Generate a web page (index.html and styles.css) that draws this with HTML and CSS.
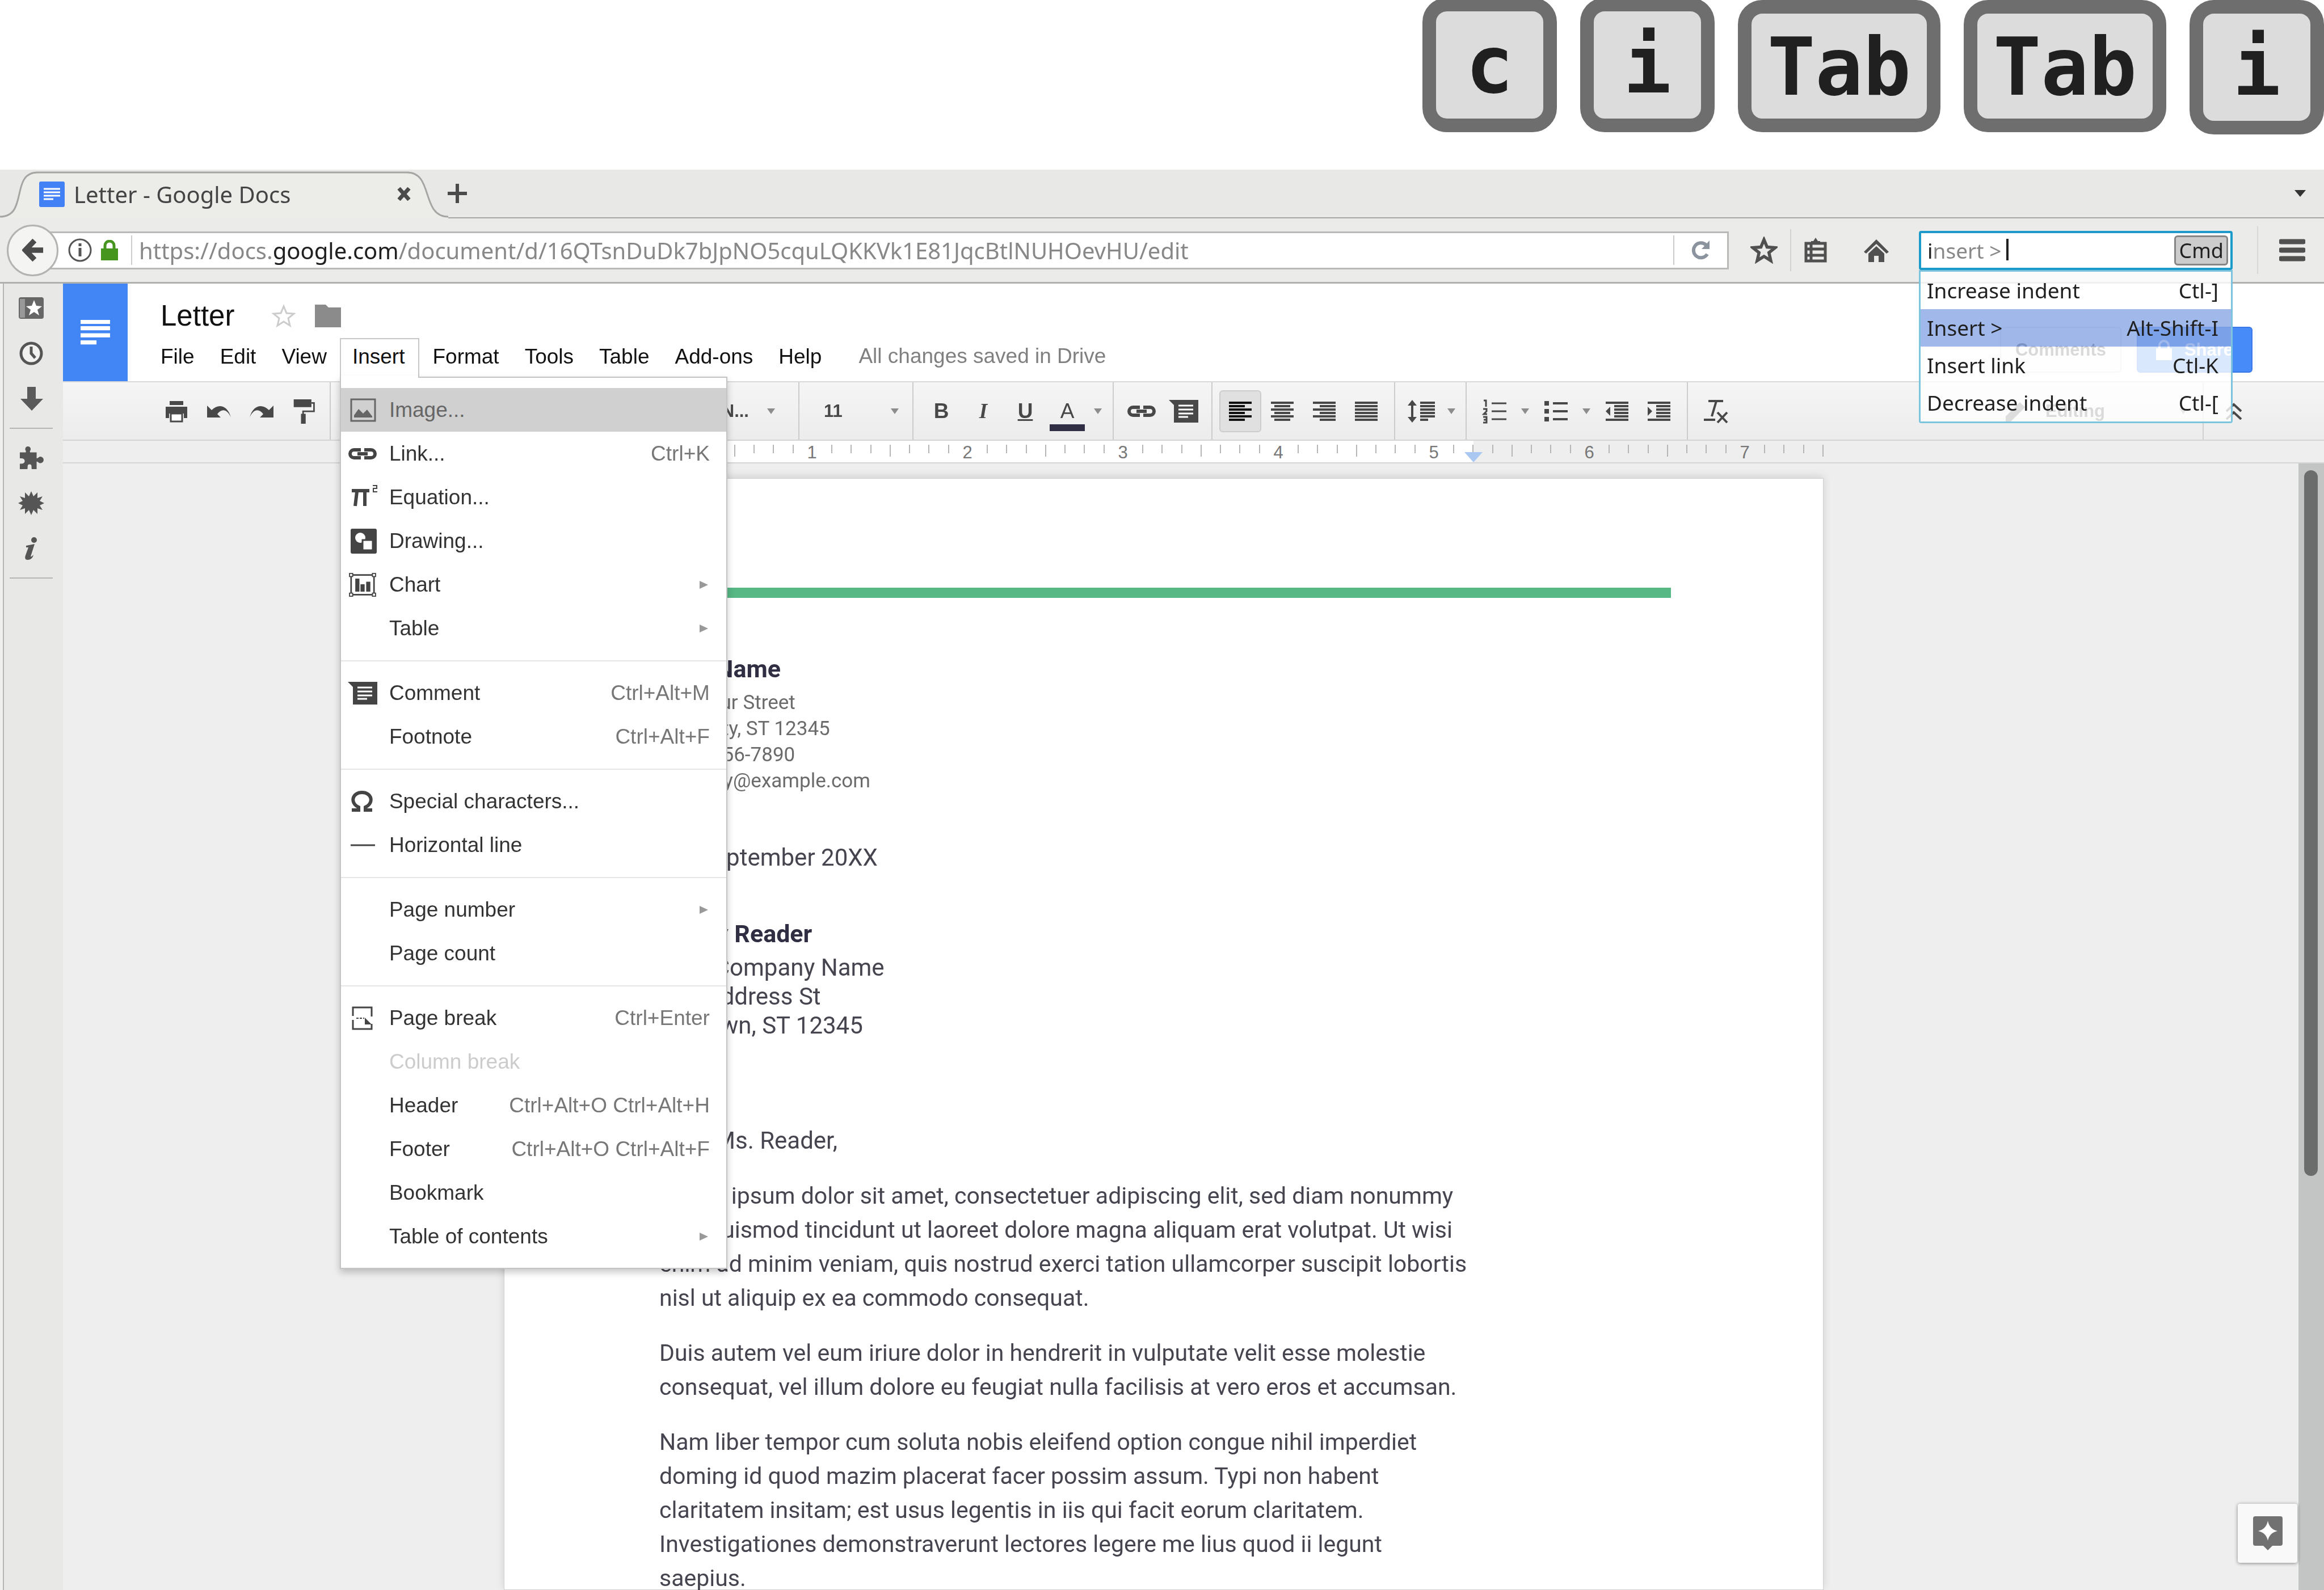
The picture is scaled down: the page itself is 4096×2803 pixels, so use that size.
FILE: index.html
```html
<!DOCTYPE html>
<html lang="en">
<head>
<meta charset="utf-8">
<title>Letter - Google Docs</title>
<link rel="stylesheet" href="styles.css">
</head>
<body>
<svg class="defs" aria-hidden="true">
  <symbol id="i-link" viewBox="0 0 52 22"><path d="M23 4H11a7 7 0 0 0 0 14h12M29 4h12a7 7 0 0 1 0 14H29M17 11h18" fill="none" stroke="currentColor" stroke-width="6"/></symbol>
  <symbol id="i-comment" viewBox="0 0 52 40"><path d="M0 0h52v40H9V9z" fill="currentColor"/><path d="M17 10h26M17 17h26M17 24h26M17 30h17" stroke="#fff" stroke-width="3"/></symbol>
  <symbol id="i-star" viewBox="0 0 44 44"><path d="M22 5l5 12 13 1-10 8 3 13-11-7-11 7 3-13-10-8 13-1z" fill="none" stroke="currentColor" stroke-width="5"/></symbol>
</svg>

<header class="keys" aria-label="Keys pressed">
  <kbd class="key key-high">c</kbd>
  <kbd class="key key-high">i</kbd>
  <kbd class="key key-wide">Tab</kbd>
  <kbd class="key key-wide">Tab</kbd>
  <kbd class="key">i</kbd>
</header>

<div class="browser">
  <div class="tabstrip">
    <div class="tab">
      <svg class="tab-shape" viewBox="0 0 790 86" aria-hidden="true"><path d="M0 82C50 82 18 4 66 4H718C764 4 742 82 790 82V86H0z" fill="#ecece9"/><path d="M0 82C50 82 18 4 66 4H718C764 4 742 82 790 82" fill="none" stroke="#a5a5a3" stroke-width="3"/></svg>
      <svg class="favicon" viewBox="0 0 45 45" aria-hidden="true"><rect width="45" height="45" rx="3" fill="#4280f6"/><path d="M8 13h29M8 19h29M8 25h29M8 31h17" stroke="#fff" stroke-width="3"/></svg>
      <span class="tab-title">Letter - Google Docs</span>
      <button class="tab-close" aria-label="Close tab"><svg viewBox="0 0 24 24"><path d="M3 2l18 20M21 2L3 22" stroke="#4b4b4b" stroke-width="7"/></svg></button>
    </div>
    <button class="tab-new" aria-label="New tab"><svg viewBox="0 0 34 34"><path d="M17 0v34M0 17h34" stroke="#4b4b4b" stroke-width="6"/></svg></button>
    <button class="tab-list" aria-label="List all tabs"><svg viewBox="0 0 20 12"><path d="M0 0h20L10 12z" fill="#333"/></svg></button>
  </div>

  <nav class="navbar">
    <button class="back" aria-label="Back"><svg viewBox="0 0 40 44"><path d="M39 22H8M23 4L6 22l17 18" fill="none" stroke="#4b4b4b" stroke-width="10"/></svg></button>
    <div class="urlbar">
      <svg class="site-info" viewBox="0 0 42 42" aria-hidden="true"><circle cx="21" cy="21" r="19" fill="none" stroke="#555" stroke-width="3"/><path d="M21 17v15M21 9v5" stroke="#555" stroke-width="5"/></svg>
      <svg class="site-lock" viewBox="0 0 30 36" aria-hidden="true"><path d="M7 17v-7a8 8 0 0 1 16 0v7" fill="none" stroke="#45951f" stroke-width="5"/><path d="M0 15h30v21H0z" fill="#45951f"/></svg>
      <div class="url-field">
        <input class="url" type="text" aria-label="Address" value="https://docs.google.com/document/d/16QTsnDuDk7bJpNO5cquLQKKVk1E81JqcBtlNUHOevHU/edit">
        <span class="url-domain"></span>
      </div>
      <button class="reload" aria-label="Reload"><svg viewBox="0 0 36 34"><path d="M29 24A13 13 0 1 1 27 8" fill="none" stroke="#8b939e" stroke-width="6"/><path d="M33 0v15H19z" fill="#8b939e"/></svg></button>
    </div>
    <button class="nav-btn nav-star" aria-label="Bookmark this page"><svg viewBox="0 0 44 44"><use href="#i-star"/></svg></button>
    <button class="nav-btn nav-board" aria-label="Show bookmarks"><svg viewBox="0 0 40 44"><path d="M12 6h4l4-6 4 6h4v6H12z" fill="#505050"/><path d="M3 10h34v31H3zM3 20h34M3 31h34M12 12v28" fill="none" stroke="#505050" stroke-width="5"/></svg></button>
    <button class="nav-btn nav-home" aria-label="Home"><svg viewBox="0 0 44 44"><path d="M0 25L22 3l22 22-4 3L22 11 4 28z" fill="#505050"/><path d="M8 28L22 15l14 13v15H26V32h-8v11H8z" fill="#505050"/></svg></button>
    <div class="command">
      <label class="command-box">
        <input class="command-input" type="text" aria-label="Command" value="insert &gt;">
        <span class="command-typed"></span>
        <span class="command-caret"></span>
        <kbd class="command-chip">Cmd</kbd>
      </label>
      <ul class="command-list">
        <li><span>Increase indent</span><span>Ctl-]</span></li>
        <li class="is-selected"><span>Insert &gt;</span><span>Alt-Shift-I</span></li>
        <li><span>Insert link</span><span>Ctl-K</span></li>
        <li><span>Decrease indent</span><span>Ctl-[</span></li>
      </ul>
    </div>
    <button class="nav-btn nav-menu" aria-label="Menu"><svg viewBox="0 0 46 40"><path d="M3 5h40M3 20h40M3 35h40" stroke="#505050" stroke-width="9" stroke-linecap="round"/></svg></button>
  </nav>

  <div class="window">
    <aside class="sidebar">
      <button class="side-btn" aria-label="Bookmarks"><svg viewBox="0 0 46 40"><rect x="1" y="1" width="44" height="38" rx="4" fill="#666"/><path d="M3 4h9v33H3z" fill="#999"/><path d="M28 6l4 10 10 1-8 6 3 10-9-6-9 6 3-10-8-6 10-1z" fill="#fff"/></svg></button>
      <button class="side-btn" aria-label="History"><svg viewBox="0 0 46 42"><circle cx="23" cy="21" r="18" fill="#f2f2f0" stroke="#555" stroke-width="5"/><path d="M23 9v12l7 8" fill="none" stroke="#555" stroke-width="5"/></svg></button>
      <button class="side-btn" aria-label="Downloads"><svg viewBox="0 0 46 42"><path d="M16 0h15v21h13L24 42 4 21h12z" fill="#5a5a5a"/></svg></button>
      <hr>
      <button class="side-btn" aria-label="Add-ons"><svg viewBox="0 0 46 44"><path d="M2 12h11c1-3-1-3-1-6a5 5 0 0 1 10 0c0 3-2 3-1 6h12v11c3 0 4-3 7-3a6 6 0 0 1 0 12c-3 0-4-3-7-3v14H24c-1-4 1-9-4-9s-3 5-4 9H2V33c4 0 9 0 9-5s-5-5-9-5z" fill="#555"/></svg></button>
      <button class="side-btn" aria-label="Effects"><svg viewBox="0 0 46 42"><path d="M23 0l4 9 7-7 0 10 9-3-5 8 8 4-8 4 5 8-9-3 0 10-7-7-4 9-4-9-7 7 0-10-9 3 5-8-8-4 8-4-5-8 9 3 0-10 7 7z" fill="#555"/></svg></button>
      <button class="side-btn" aria-label="Page info"><svg viewBox="0 0 46 40"><circle cx="28" cy="5" r="5" fill="#555"/><path d="M14 15l15-3-7 22c1 1 3-1 5-3-1 6-6 9-10 9-6 0-5-5-4-8l5-14h-4z" fill="#555"/></svg></button>
      <hr>
    </aside>

    <main class="docs">
      <header class="docs-header">
        <a class="docs-logo" href="#" aria-label="Docs home"><svg viewBox="0 0 50 42"><path d="M0 3h50M0 14h50M0 26h50M0 38h27" stroke="#fff" stroke-width="7"/></svg></a>
        <div class="docs-heading">
          <div class="docs-title-row">
            <h1>Letter</h1>
            <button class="title-star" aria-label="Star"><svg viewBox="0 0 42 42"><path d="M21 4l5 12 13 1-10 8 3 13-11-7-11 7 3-13-10-8 13-1z" fill="none" stroke="#ccc" stroke-width="3"/></svg></button>
            <button class="title-folder" aria-label="Move to folder"><svg viewBox="0 0 46 40"><path d="M0 0h19l5 5h22v35H0z" fill="#8b8b8b"/></svg></button>
          </div>
          <div class="menubar">
            <button class="menubar-btn">File</button>
            <button class="menubar-btn">Edit</button>
            <button class="menubar-btn">View</button>
            <div class="menubar-open">
              <button class="menubar-btn is-open" aria-expanded="true">Insert</button>
              <ul class="menu">
                <li class="is-hover"><svg viewBox="0 0 54 44"><rect x="7" y="3" width="42" height="38" fill="none" stroke="currentColor" stroke-width="3"/><path d="M12 35v-4l8-11 8 8 7-7 9 12v2z" fill="currentColor"/></svg><span>Image...</span></li>
                <li><svg viewBox="0 0 54 44"><use href="#i-link" x="1" y="11" width="52" height="22"/></svg><span>Link...</span><kbd>Ctrl+K</kbd></li>
                <li><svg viewBox="0 0 54 44"><path d="M8 10h31M17 12l-3 25M31 12v25" fill="none" stroke="currentColor" stroke-width="6"/><path d="M45 1h7v5h-6v6h7" fill="none" stroke="currentColor" stroke-width="2"/></svg><span>Equation...</span></li>
                <li><svg viewBox="0 0 54 44"><rect x="6" y="0" width="46" height="44" rx="3" fill="currentColor"/><circle cx="23" cy="16" r="9" fill="#fff"/><path d="M27 20h18v18H27z" fill="#fff" stroke="currentColor" stroke-width="3"/></svg><span>Drawing...</span></li>
                <li><svg viewBox="0 0 54 48"><path d="M5 5h44v38H5z" fill="none" stroke="currentColor" stroke-width="3"/><path d="M2 2h6v6H2zM46 2h6v6h-6zM2 40h6v6H2zM46 40h6v6h-6z" fill="#fff" stroke="currentColor" stroke-width="2"/><path d="M17 12v25M27 23v14M38 18v19" stroke="currentColor" stroke-width="8"/></svg><span>Chart</span><i class="more"></i></li>
                <li><span class="no-icon">Table</span><i class="more"></i></li>
                <li class="rule" role="separator"></li>
                <li><svg viewBox="0 0 54 44"><use href="#i-comment" x="1" y="2" width="52" height="40"/></svg><span>Comment</span><kbd>Ctrl+Alt+M</kbd></li>
                <li><span class="no-icon">Footnote</span><kbd>Ctrl+Alt+F</kbd></li>
                <li class="rule" role="separator"></li>
                <li><svg viewBox="0 0 54 44"><path d="M8 37h12v-5C4 24 9 6 26 6s22 18 6 26v5h12" fill="none" stroke="currentColor" stroke-width="6"/></svg><span>Special characters...</span></li>
                <li><svg viewBox="0 0 54 44"><path d="M6 22h43" stroke="currentColor" stroke-width="3"/></svg><span>Horizontal line</span></li>
                <li class="rule" role="separator"></li>
                <li><span class="no-icon">Page number</span><i class="more"></i></li>
                <li><span class="no-icon">Page count</span></li>
                <li class="rule" role="separator"></li>
                <li><svg viewBox="0 0 54 44"><path d="M10 18V3h33v16M10 25v16h33V32" fill="none" stroke="currentColor" stroke-width="3"/><path d="M16 22h14" stroke="currentColor" stroke-width="2" stroke-dasharray="4 2"/><path d="M31 21l12 12H31z" fill="currentColor"/></svg><span>Page break</span><kbd>Ctrl+Enter</kbd></li>
                <li class="is-disabled"><span class="no-icon">Column break</span></li>
                <li><span class="no-icon">Header</span><kbd>Ctrl+Alt+O Ctrl+Alt+H</kbd></li>
                <li><span class="no-icon">Footer</span><kbd>Ctrl+Alt+O Ctrl+Alt+F</kbd></li>
                <li><span class="no-icon">Bookmark</span></li>
                <li><span class="no-icon">Table of contents</span><i class="more"></i></li>
              </ul>
            </div>
            <button class="menubar-btn">Format</button>
            <button class="menubar-btn">Tools</button>
            <button class="menubar-btn">Table</button>
            <button class="menubar-btn">Add-ons</button>
            <button class="menubar-btn">Help</button>
            <span class="save-state">All changes saved in Drive</span>
          </div>
        </div>
        <div class="docs-actions">
          <button class="btn-comments">Comments</button>
          <button class="btn-share"><svg viewBox="0 0 28 36"><path d="M6 16v-6a8 8 0 0 1 16 0v6" fill="none" stroke="#fff" stroke-width="4"/><path d="M0 15h28v21H0z" fill="#fff"/></svg>Share</button>
        </div>
      </header>

      <div class="toolbar">
        <div class="group group-first">
          <button class="tool" aria-label="Print"><svg viewBox="0 0 44 44"><path d="M10 4h24v7H10zM3 14h38v20h-6v-8H9v8H3z" fill="#484848"/><path d="M12 26h20v14H12z" fill="#fff" stroke="#484848" stroke-width="3"/></svg></button>
          <button class="tool" aria-label="Undo"><svg viewBox="0 0 44 44"><path d="M1 12l8 8c12-12 28-9 34 13-6-14-16-17-24-6l6 6H1z" fill="#484848"/></svg></button>
          <button class="tool" aria-label="Redo"><svg viewBox="0 0 44 44"><path d="M43 12l-8 8C23 8 7 11 1 33c6-14 16-17 24-6l-6 6h24z" fill="#484848"/></svg></button>
          <button class="tool" aria-label="Paint format"><svg viewBox="0 0 44 48"><path d="M2 1h34v15H2zM16 29h9v19h-9z" fill="#484848"/><path d="M36 8h5v16H20v6" fill="none" stroke="#484848" stroke-width="3"/></svg></button>
        </div>
        <div class="group group-font"><button class="pick">Proxima N...<i class="down"></i></button></div>
        <div class="group group-size"><button class="pick">11<i class="down"></i></button></div>
        <div class="group group-text">
          <button class="tool tool-letter bold">B</button>
          <button class="tool tool-letter italic">I</button>
          <button class="tool tool-letter under">U</button>
          <button class="tool tool-letter color"><span>A</span></button>
          <button class="drop" aria-label="Text color options"><i class="down"></i></button>
        </div>
        <div class="group">
          <button class="tool" aria-label="Insert link"><svg class="wide" viewBox="0 0 52 22"><use href="#i-link"/></svg></button>
          <button class="tool" aria-label="Insert comment"><svg class="wide" viewBox="0 0 52 40"><use href="#i-comment"/></svg></button>
        </div>
        <div class="group">
          <button class="tool is-on" aria-label="Align left"><svg viewBox="0 0 44 40"><path d="M2 5h40M2 11h28M2 17h40M2 23h28M2 29h40M2 35h28" stroke="#111" stroke-width="4"/></svg></button>
          <button class="tool" aria-label="Align center"><svg viewBox="0 0 44 40"><path d="M2 5h40M8 11h28M2 17h40M8 23h28M2 29h40M8 35h28" stroke="#484848" stroke-width="4"/></svg></button>
          <button class="tool" aria-label="Align right"><svg viewBox="0 0 44 40"><path d="M2 5h40M14 11h28M2 17h40M14 23h28M2 29h40M14 35h28" stroke="#484848" stroke-width="4"/></svg></button>
          <button class="tool" aria-label="Justify"><svg viewBox="0 0 44 40"><path d="M2 5h40M2 11h40M2 17h40M2 23h40M2 29h40M2 35h40" stroke="#484848" stroke-width="4"/></svg></button>
        </div>
        <div class="group group-spacing">
          <button class="tool" aria-label="Line spacing"><svg class="wide" viewBox="0 0 52 40"><path d="M25 5h26M25 11h26M25 17h26M25 23h26M25 29h26M25 35h14" stroke="#484848" stroke-width="4"/><path d="M11 6v28" stroke="#484848" stroke-width="4"/><path d="M3 10l8-10 8 10zM3 30l8 10 8-10z" fill="#484848"/></svg></button>
          <button class="drop" aria-label="Line spacing options"><i class="down"></i></button>
        </div>
        <div class="group">
          <button class="tool" aria-label="Numbered list"><svg viewBox="0 0 44 44"><path d="M17 8h26M17 22h26M17 36h26M3 3h4v11M2 18h6v4l-5 5h6M2 32h6v10H2M3 37h5" fill="none" stroke="#484848" stroke-width="3"/></svg></button>
          <button class="drop" aria-label="Numbered list options"><i class="down"></i></button>
          <button class="tool" aria-label="Bulleted list"><svg viewBox="0 0 44 44"><path d="M17 8h26M17 22h26M17 36h26" stroke="#484848" stroke-width="4"/><path d="M2 4h8v8H2zM2 18h8v8H2zM2 32h8v8H2z" fill="#484848"/></svg></button>
          <button class="drop" aria-label="Bulleted list options"><i class="down"></i></button>
          <button class="tool" aria-label="Decrease indent"><svg viewBox="0 0 44 40"><path d="M2 5h40M17 11h25M17 17h25M17 23h25M17 29h25M2 35h40" stroke="#484848" stroke-width="4"/><path d="M10 12v16l-8-8z" fill="#484848"/></svg></button>
          <button class="tool" aria-label="Increase indent"><svg viewBox="0 0 44 40"><path d="M2 5h40M17 11h25M17 17h25M17 23h25M17 29h25M2 35h40" stroke="#484848" stroke-width="4"/><path d="M2 12v16l8-8z" fill="#484848"/></svg></button>
        </div>
        <div class="group group-last">
          <button class="tool" aria-label="Clear formatting"><svg viewBox="0 0 44 44"><path d="M9 4h26M23 4l-8 27M1 37h20M25 24l17 18M42 24L25 42" fill="none" stroke="#484848" stroke-width="4"/></svg></button>
        </div>
        <button class="mode"><svg viewBox="0 0 36 36"><path d="M0 36v-9L25 2l9 9L9 36z" fill="#555"/></svg>Editing<i class="down"></i></button>
        <button class="collapse" aria-label="Hide the menus"><svg viewBox="0 0 30 30"><path d="M2 15L15 3l13 12M2 29l13-12 13 12" fill="none" stroke="#484848" stroke-width="4"/></svg></button>
      </div>

      <div class="ruler">
        <div class="ruler-scale">
          <svg class="ticks" aria-hidden="true"><defs><pattern id="inch" width="274" height="38" patternUnits="userSpaceOnUse"><path d="M35 7v15M69 7v15M104 7v15M138 7v21M172 7v15M206 7v15M241 7v15" stroke="#b5b5b5" stroke-width="2"/></pattern></defs><rect width="100%" height="38" fill="url(#inch)"/></svg>
          <span>1</span><span>2</span><span>3</span><span>4</span><span>5</span><span>6</span><span>7</span>
          <i class="ruler-marker"></i>
        </div>
      </div>

      <div class="canvas">
        <article class="page">
          <div class="page-bar"></div>
          <h2 class="sender">Your Name</h2>
          <p class="small">123 Your Street<br>Your City, ST 12345<br>(123) 456-7890<br>no_reply@example.com</p>
          <p class="date">4th September 20XX</p>
          <h2>Ronny Reader</h2>
          <p class="address">CEO, Company Name<br>123 Address St<br>Anytown, ST 12345</p>
          <p class="greeting">Dear Ms. Reader,</p>
          <p class="body">Lorem ipsum dolor sit amet, consectetuer adipiscing elit, sed diam nonummy<br>nibh euismod tincidunt ut laoreet dolore magna aliquam erat volutpat. Ut wisi<br>enim ad minim veniam, quis nostrud exerci tation ullamcorper suscipit lobortis<br>nisl ut aliquip ex ea commodo consequat.</p>
          <p class="body">Duis autem vel eum iriure dolor in hendrerit in vulputate velit esse molestie<br>consequat, vel illum dolore eu feugiat nulla facilisis at vero eros et accumsan.</p>
          <p class="body">Nam liber tempor cum soluta nobis eleifend option congue nihil imperdiet<br>doming id quod mazim placerat facer possim assum. Typi non habent<br>claritatem insitam; est usus legentis in iis qui facit eorum claritatem.<br>Investigationes demonstraverunt lectores legere me lius quod ii legunt<br>saepius.</p>
        </article>
        <div class="scrollbar"><div class="thumb"></div></div>
        <button class="explore" aria-label="Explore"><svg viewBox="0 0 52 60"><path d="M4 0h44a4 4 0 0 1 4 4v44a4 4 0 0 1-4 4H34l-8 8-8-8H4a4 4 0 0 1-4-4V4a4 4 0 0 1 4-4z" fill="#717171"/><path d="M26 8q3 15 17 18-14 3-17 17-3-14-17-17Q23 23 26 8z" fill="#fff"/></svg></button>
      </div>
    </main>
  </div>
</div>
</body>
</html>
```
FILE: styles.css
```css
* { box-sizing: border-box; }

body {
  margin: 0;
  height: 100vh;
  display: flex;
  flex-direction: column;
  overflow: hidden;
  background: #fff;
  font-family: "Liberation Sans", Arial, sans-serif;
  font-size: 37px;
  color: #222;
}

button {
  margin: 0;
  padding: 0;
  border: 0;
  background: none;
  font: inherit;
  color: inherit;
  display: flex;
  align-items: center;
  justify-content: center;
  flex: none;
}
svg { display: block; flex: none; }
ul { list-style: none; margin: 0; padding: 0; }
h1, h2, p { margin: 0; font-weight: normal; }
kbd { font: inherit; }
.defs { position: absolute; width: 0; height: 0; }

/* Keystroke strip */
.keys {
  flex: none;
  height: 299px;
  display: flex;
  justify-content: flex-end;
  align-items: flex-start;
  gap: 41px;
}
.key {
  width: 237px;
  height: 237px;
  border: 24px solid #6e6e6e;
  border-radius: 43px;
  background: #dcdcdc;
  color: #202020;
  font: bold 140px/190px "DejaVu Sans Mono", monospace;
  text-align: center;
}
.key-high { margin-top: -4px; }
.key-wide { width: 357px; height: 233px; }

/* Browser chrome */
.browser {
  flex: 1;
  min-height: 0;
  display: flex;
  flex-direction: column;
  background: #e8e8e6;
}
.tabstrip {
  flex: none;
  height: 86px;
  display: flex;
  align-items: center;
  border-bottom: 2px solid #a5a5a3;
  font: 40px "Noto Sans", sans-serif;
  color: #444;
}
.tab {
  position: relative;
  display: flex;
  align-items: center;
  width: 784px;
  height: 84px;
  padding: 8px 60px 6px 69px;
}
.tab-shape { position: absolute; left: 0; top: 1px; width: 790px; height: 86px; }
.favicon { position: relative; width: 45px; height: 45px; }
.tab-title { position: relative; flex: 1; margin-left: 16px; }
.tab-close { position: relative; width: 24px; height: 24px; }
.tab-new svg { width: 34px; height: 34px; }
.tab-new { margin-left: 5px; }
.tab-list { margin-left: auto; margin-right: 32px; }
.tab-list svg { width: 20px; height: 12px; }

.navbar {
  flex: none;
  height: 115px;
  display: flex;
  align-items: center;
  border-bottom: 3px solid #b0b0ae;
  background: #ebebe9;
  padding-left: 12px;
}
.back {
  position: relative;
  z-index: 1;
  width: 91px;
  height: 91px;
  border: 3px solid #b3b3b1;
  border-radius: 50%;
  background: #f4f4f3;
}
.back svg { width: 38px; height: 42px; }
.urlbar {
  flex: 1;
  height: 67px;
  margin-left: -22px;
  display: flex;
  align-items: center;
  border: 3px solid #b9b9b7;
  background: #fff;
  padding-left: 36px;
}
.site-info { width: 42px; height: 42px; }
.site-lock { width: 30px; height: 36px; margin: 0 23px 0 16px; }
.url-field {
  position: relative;
  flex: 1;
  border-left: 2px solid #ccc;
  border-right: 2px solid #ccc;
  height: 52px;
  padding-left: 12px;
}
.url, .command-input {
  width: 100%;
  height: 100%;
  border: 0;
  padding: 0;
  outline: 0;
  background: #fff;
}
.url { font: 40px "Noto Sans", sans-serif; color: #888; }
/* Darkens the grey text below to near black */
.url-domain, .command-typed {
  position: absolute;
  mix-blend-mode: color-burn;
  background: #888;
}
.url-domain { left: 248px; top: 0; width: 219px; height: 52px; }
.reload { width: 93px; height: 60px; }
.reload svg { width: 36px; height: 34px; }

.nav-btn { color: #505050; }
.nav-btn svg { height: 44px; }
.nav-star { width: 108px; padding-left: 16px; }
.nav-star svg { width: 48px; height: 48px; }
.nav-board { width: 88px; height: 74px; border-left: 2px solid #d2d2d0; }
.nav-board svg { width: 40px; }
.nav-home { width: 128px; margin-right: 11px; }
.nav-home svg { width: 44px; }
.nav-menu { width: 118px; height: 84px; margin-left: 43px; border-left: 2px solid #d8d8d6; }
.nav-menu svg { width: 46px; height: 40px; margin-right: -3px; }

/* Command palette */
.command {
  position: relative;
  z-index: 5;
  width: 553px;
  font: 37px "Noto Sans", sans-serif;
  color: #202020;
}
.command-box {
  display: flex;
  align-items: center;
  height: 69px;
  border: 4px solid #1c9bcb;
  border-radius: 4px;
  background: #fff;
  padding: 0 4px 0 11px;
  position: relative;
}
.command-input { flex: 1; min-width: 0; font: inherit; color: #888; }
.command-typed { left: 7px; top: 4px; width: 14px; height: 50px; }
.command-caret { position: absolute; left: 150px; top: 10px; width: 4px; height: 38px; background: #202020; }
.command-chip {
  height: 53px;
  border: 3px solid #858585;
  border-radius: 6px;
  background: #ccc;
  padding: 0 5px;
  font-size: 36px;
  line-height: 47px;
}
.command-list {
  position: absolute;
  left: 0;
  right: 0;
  top: 69px;
  border: 3px solid #7cc4de;
  border-radius: 0 0 4px 4px;
}
.command-list li {
  display: flex;
  justify-content: space-between;
  height: 66px;
  line-height: 66px;
  padding: 0 22px 0 11px;
  background: rgba(255, 255, 255, .8);
}
.command-list .is-selected { background: rgba(136, 166, 229, .8); }

/* Firefox side strip */
.window { flex: 1; min-height: 0; display: flex; }
.sidebar {
  flex: none;
  width: 111px;
  display: flex;
  flex-direction: column;
  align-items: center;
  gap: 38px;
  padding: 22px 6px 0 0;
  border-left: 5px solid #f0f0ee;
  box-shadow: inset 2px 0 #b5b5b3;
}
.side-btn { height: 42px; }
.side-btn svg { width: 46px; height: 42px; }
.sidebar hr { width: 76px; margin: -8px 0; border: 0; border-top: 2px solid #b5b5b3; }

/* Docs header */
.docs {
  flex: 1;
  min-width: 0;
  display: flex;
  flex-direction: column;
  background: #eee;
}
.docs-header {
  flex: none;
  height: 174px;
  display: flex;
  background: #fff;
  border-bottom: 2px solid #d8d8d8;
}
.docs-logo {
  width: 114px;
  display: flex;
  align-items: center;
  justify-content: center;
  background: #4285f4;
}
.docs-logo svg { width: 52px; height: 44px; }
.docs-heading { flex: 1; padding-left: 36px; }
.docs-title-row { display: flex; align-items: center; height: 96px; padding: 18px 0 0 22px; }
.docs-title-row h1 { font-size: 51px; line-height: 78px; color: #111; }
.title-star { margin-left: 66px; }
.title-star svg { width: 42px; height: 42px; }
.title-folder { margin-left: 34px; }
.title-folder svg { width: 46px; height: 40px; }
.menubar { display: flex; gap: 1px; color: #111; }
.menubar-btn { height: 68px; padding: 0 20px 4px; border: 2px solid transparent; border-bottom: 0; }
.menubar-btn.is-open { padding-right: 24px; border-color: #c8c8c8; background: #fff; }
.save-state { margin-left: 42px; line-height: 64px; color: #808080; }
.docs-actions { display: flex; gap: 27px; padding: 76px 126px 15px 0; font-size: 31px; font-weight: bold; }
.btn-comments { height: 81px; width: 214px; border: 2px solid #ddd; border-radius: 6px; background: #f8f8f8; color: #444; }
.btn-share { height: 81px; width: 204px; gap: 22px; border: 2px solid #3a78ea; border-radius: 6px; background: #468bf8; color: #fff; }
.btn-share svg { width: 28px; height: 36px; }

/* Insert menu */
.menubar-open { position: relative; z-index: 4; }
.menubar-open::after {
  content: "";
  position: absolute;
  left: 2px;
  right: 2px;
  top: 66px;
  height: 6px;
  background: #fff;
}
.menu {
  position: absolute;
  left: 0;
  top: 68px;
  width: 683px;
  padding: 18px 0 17px;
  border: 2px solid #c4c4c4;
  background: #fff;
  box-shadow: 0 6px 12px rgba(0, 0, 0, .22);
  color: #333;
}
.menu li { display: flex; align-items: center; height: 77px; padding: 0 29px 0 11px; }
.menu li svg { width: 54px; height: 44px; margin-right: 20px; color: #444; }
.menu span { flex: 1; white-space: nowrap; }
.menu .no-icon { padding-left: 74px; }
.menu kbd { color: #777; }
.menu .is-hover { background: #d0d0d0; color: #666; }
.menu .is-hover svg { color: #666; }
.menu .is-disabled { color: #ccc; }
.menu .rule { height: 2px; margin: 18px 0 17px; background: #e5e5e5; }
.more { border: 7px solid transparent; border-left: 15px solid #999; border-right: 0; margin-right: 3px; }

/* Toolbar */
.toolbar {
  flex: none;
  height: 103px;
  display: flex;
  align-items: center;
  padding-right: 106px;
  background: linear-gradient(#f5f5f5, #ececec);
  border-bottom: 2px solid #d4d4d4;
  font-size: 31px;
  font-weight: bold;
  color: #484848;
}
.group { flex: none; display: flex; align-items: center; height: 100%; padding: 0 12px; border-right: 2px solid #ccc; }
.group-first { padding: 0 8px 0 162px; }
.group-first .tool { width: 75px; }
.group-font { width: 826px; padding: 0 41px 0 0; justify-content: flex-end; }
.group-font .pick { gap: 32px; }
.group-size { width: 201px; padding: 0 24px 0 43px; }
.group-size .pick { flex: 1; justify-content: space-between; }
.group-text { padding: 0 9px 0 12px; }
.group-spacing { padding: 0 8px; }
.group-last { border: 0; }
.tool { width: 74px; height: 74px; }
.tool svg { width: 44px; height: 44px; color: #484848; }
.tool svg.wide { width: 52px; height: 40px; }
.tool.is-on { border: 2px solid #ccc; border-radius: 6px; background: #e0e0e0; }
.tool-letter { font-size: 37px; }
.italic { font-family: "Liberation Serif", serif; font-style: italic; }
.under { text-decoration: underline; }
.color { font-weight: normal; }
.color span { border-bottom: 12px solid #2f2e45; line-height: 46px; padding: 0 19px; margin-top: 12px; }
.drop { width: 34px; height: 74px; }
.down { border: 7px solid transparent; border-top: 10px solid #8c8c8c; border-bottom: 0; }
.mode { width: 350px; height: 74px; margin-left: auto; gap: 34px; justify-content: flex-start; padding-left: 3px; }
.mode svg { width: 36px; height: 36px; }
.mode .down { margin: 0 27px 0 auto; }
.collapse { width: 108px; height: 100%; border-left: 2px solid #d0d0d0; }
.collapse svg { width: 30px; height: 30px; }

/* Ruler */
.ruler { flex: none; height: 40px; padding-left: 777px; border-bottom: 2px solid #d4d4d4; }
.ruler-scale {
  position: relative;
  display: flex;
  width: 2326px;
  height: 38px;
  padding-left: 406px;
  background: linear-gradient(90deg, #eee 269px, #fff 269px, #fff 1709px, #eee 1709px);
  font-size: 31px;
  line-height: 42px;
  color: #777;
}
.ruler-scale span { width: 274px; text-align: center; }
.ticks { position: absolute; left: 269px; top: 0; width: 2057px; height: 38px; }
.ruler-marker { position: absolute; left: 1693px; bottom: 0; border: 16px solid transparent; border-top: 18px solid #a9c7f0; border-bottom: 0; }

/* Document */
.canvas { position: relative; flex: 1; min-height: 0; display: flex; overflow: hidden; }
.page {
  flex: none;
  width: 2326px;
  margin: 26px 0 0 777px;
  padding: 192px 268px 0 273px;
  border: 1px solid #d0d0d0;
  background: #fff;
  box-shadow: 0 -3px 14px rgba(0, 0, 0, .12);
  font: 42px/60px Roboto, sans-serif;
  color: #46454f;
}
.page-bar { height: 18px; background: #57b785; margin-bottom: 95px; }
.page p { margin-bottom: 37px; white-space: nowrap; }
.page h2 { font-size: 43px; font-weight: bold; color: #2f2e42; margin-bottom: 4px; }
.page .small { font-size: 35px; line-height: 46px; color: #6b6b6b; margin: 7px 0 82px; }
.page .date { margin-bottom: 74px; }
.page .address { line-height: 51px; margin-bottom: 148px; }
.page .body { font-size: 41px; }

.scrollbar { width: 45px; margin-left: auto; padding: 12px 11px 0 10px; background: #c3c5c4; }
.thumb { height: 63%; border-radius: 12px; background: #6b6d6c; }
.explore {
  position: absolute;
  right: 47px;
  bottom: 48px;
  width: 105px;
  height: 104px;
  border-radius: 4px;
  background: #f9f9f9;
  box-shadow: 0 1px 6px rgba(0, 0, 0, .45);
}
.explore svg { width: 52px; height: 60px; }
```
